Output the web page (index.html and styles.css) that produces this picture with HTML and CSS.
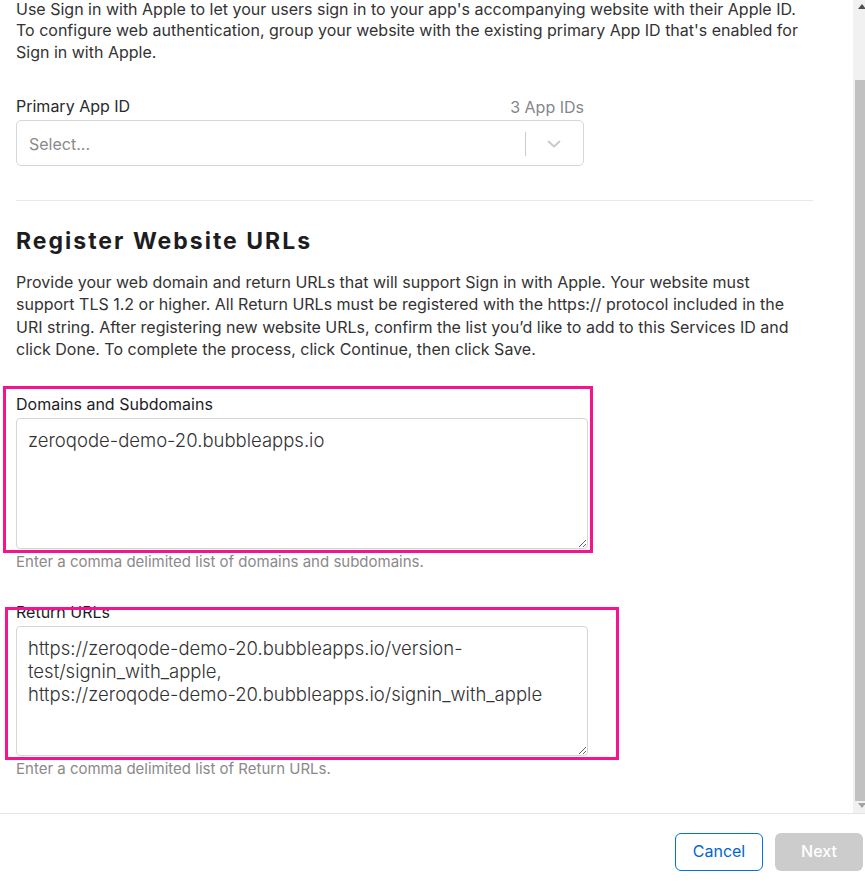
FILE: index.html
```html
<!DOCTYPE html>
<html lang="en">
<head>
<meta charset="utf-8">
<title>Register Website URLs</title>
<link rel="stylesheet" href="styles.css">
</head>
<body>
<div class="window">
  <div class="scroll-area">
    <div class="content">
      <p class="intro">Use Sign in with Apple to let your users sign in to your app's accompanying website with their Apple ID. To configure web authentication, group your website with the existing primary App ID that's enabled for Sign in with Apple.</p>

      <div class="field field-select">
        <div class="label-row">
          <span class="label">Primary App ID</span>
          <span class="count">3 App IDs</span>
        </div>
        <div class="select">
          <span class="placeholder">Select...</span>
          <span class="select-sep"></span>
          <svg class="chevron" width="14" height="8" viewBox="0 0 14 8"><path d="M1.5 1.5 L7 6.5 L12.5 1.5" fill="none" stroke="#c8c8c8" stroke-width="1.8" stroke-linecap="round" stroke-linejoin="round"/></svg>
        </div>
      </div>

      <hr class="divider">

      <h2 class="heading">Register Website URLs</h2>
      <p class="desc">Provide your web domain and return URLs that will support Sign in with Apple. Your website must support TLS 1.2 or higher. All Return URLs must be registered with the https:// protocol included in the URI string. After registering new website URLs, confirm the list you’d like to add to this Services ID and click Done. To complete the process, click Continue, then click Save.</p>

      <div class="field field-domains">
        <label class="label label-strong" for="domains">Domains and Subdomains</label>
        <textarea id="domains" class="textarea ta-domains" readonly>zeroqode-demo-20.bubbleapps.io</textarea>
        <div class="help">Enter a comma delimited list of domains and subdomains.</div>
        <div class="highlight hl-domains"></div>
      </div>

      <div class="field field-return">
        <label class="label label-strong" for="returns">Return URLs</label>
        <textarea id="returns" class="textarea ta-returns" readonly>https://zeroqode-demo-20.bubbleapps.io/version-test/signin_with_apple,
https://zeroqode-demo-20.bubbleapps.io/signin_with_apple</textarea>
        <div class="help">Enter a comma delimited list of Return URLs.</div>
        <div class="highlight hl-returns"></div>
      </div>
    </div>

    <div class="scrollbar">
      <div class="sb-btn sb-up"><span class="tri tri-up"></span></div>
      <div class="sb-track"><div class="sb-thumb"></div></div>
      <div class="sb-btn sb-down"><span class="tri tri-down"></span></div>
    </div>
  </div>

  <div class="footer">
    <button class="btn btn-cancel" type="button">Cancel</button>
    <button class="btn btn-next" type="button" disabled>Next</button>
  </div>
</div>
</body>
</html>
```

FILE: styles.css
```css
* { box-sizing: border-box; }

html, body {
  margin: 0;
  padding: 0;
  background: #ffffff;
}

body {
  font-family: Inter, "Noto Sans", "Liberation Sans", sans-serif;
  color: #333333;
  font-size: 16px;
}

.window {
  width: 865px;
  height: 881px;
  display: flex;
  flex-direction: column;
  overflow: hidden;
}

.scroll-area {
  height: 813px;
  display: flex;
  flex-direction: row;
  overflow: hidden;
}

.content {
  flex: 1;
  padding: 0 40px 0 16px;
  position: relative;
}

.intro {
  margin: -1px 0 0 0;
  font-size: 16px;
  line-height: 21.3px;
  color: #333333;
}

.field-select {
  margin-top: 33px;
  width: 568px;
}

.label-row {
  display: flex;
  justify-content: space-between;
  align-items: baseline;
  line-height: 21px;
  height: 21px;
  margin-bottom: 3px;
}

.label {
  display: block;
  font-size: 16px;
  line-height: 21px;
  color: #2a2a2a;
}

.count {
  font-size: 16px;
  color: #86868b;
  position: relative;
  top: 1px;
}

.select {
  height: 46px;
  border: 1px solid #d6d6d6;
  border-radius: 5px;
  display: flex;
  align-items: center;
  padding: 2px 22px 0 12px;
}

.placeholder {
  flex: 1;
  color: #8a8a8a;
  font-size: 16px;
}

.select-sep {
  width: 1px;
  height: 24px;
  background: #cccccc;
  margin-right: 21px;
}

.chevron {
  display: block;
}

.divider {
  border: 0;
  border-top: 1px solid #e8e8ed;
  margin: 34px 0 0 0;
  height: 0;
}

.heading {
  margin: 25px 0 0 0;
  font-size: 23px;
  line-height: 30px;
  font-weight: 700;
  color: #1d1d1f;
  letter-spacing: 2px;
}

.desc {
  margin: 15px 0 0 0;
  max-width: 782px;
  font-size: 16px;
  line-height: 22.5px;
  color: #333333;
}

.field {
  position: relative;
}

.field-domains {
  margin-top: 33px;
  width: 572px;
}

.field-return {
  margin-top: 30px;
  width: 572px;
}

.label-strong {
  color: #1d1d1f;
  margin-bottom: 3px;
}

.textarea {
  display: block;
  width: 572px;
  border: 1px solid #d6d6d6;
  border-radius: 4px;
  padding: 10px 11px;
  font-family: Inter, "Noto Sans", "Liberation Sans", sans-serif;
  font-size: 18.5px;
  font-weight: 300;
  line-height: 23px;
  color: #333333;
  background: #ffffff;
  resize: vertical;
  outline: none;
}

.ta-domains { height: 131px; }
.ta-returns { height: 130px; }

.help {
  margin-top: 3px;
  font-size: 15px;
  line-height: 20px;
  color: #8a8a8a;
}

.highlight {
  position: absolute;
  border: 3px solid #f5138e;
  pointer-events: none;
}

.hl-domains {
  left: -13px;
  top: -8px;
  width: 590px;
  height: 167px;
}

.hl-returns {
  left: -11px;
  top: 5px;
  width: 614px;
  height: 153px;
}

.scrollbar {
  width: 12px;
  flex: none;
  background: #f1f1f1;
  display: flex;
  flex-direction: column;
}

.sb-btn {
  height: 12px;
  flex: none;
  position: relative;
}

.sb-track {
  flex: 1;
  display: flex;
  flex-direction: column;
  justify-content: flex-end;
}

.sb-thumb {
  height: 721px;
  margin-left: 2px;
  background: #c1c1c1;
}

.tri {
  position: absolute;
  left: 5px;
  width: 0;
  height: 0;
  border-left: 4px solid transparent;
  border-right: 4px solid transparent;
}

.tri-up {
  top: 4px;
  border-bottom: 5px solid #505050;
}

.tri-down {
  top: 2px;
  border-top: 5px solid #a3a3a3;
}

.footer {
  height: 68px;
  border-top: 1px solid #e5e5e5;
  display: flex;
  justify-content: flex-end;
  align-items: flex-start;
  gap: 12px;
  padding: 19px 2px 0 0;
}

.btn {
  width: 88px;
  height: 38px;
  border-radius: 6px;
  padding: 0 0 3px 0;
  font-family: Inter, "Noto Sans", "Liberation Sans", sans-serif;
  font-size: 16px;
  cursor: pointer;
}

.btn-cancel {
  background: #ffffff;
  border: 1px solid #0071e3;
  color: #0066cc;
}

.btn-next {
  background: #cccccc;
  border: 0;
  color: #ffffff;
  font-weight: 500;
}
```
